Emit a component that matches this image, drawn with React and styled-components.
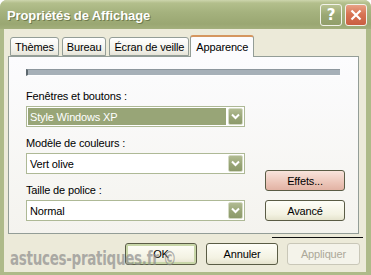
import React from "react";
import styled, { createGlobalStyle } from "styled-components";

const GlobalStyle = createGlobalStyle`
  html, body {
    margin: 0;
    padding: 0;
    background: #ffffff;
  }
  * {
    box-sizing: border-box;
  }
`;

const Window = styled.div`
  position: relative;
  width: 371px;
  height: 275px;
  display: flex;
  flex-direction: column;
  background: #aeba89;
  border-radius: 7px 7px 0 0;
  overflow: hidden;
  font-family: "Liberation Sans", Arial, sans-serif;
  font-size: 11px;
  letter-spacing: -0.15px;
  color: #000;
`;

const TitleBar = styled.div`
  height: 29px;
  flex: none;
  display: flex;
  align-items: center;
  justify-content: space-between;
  padding: 0 4px 0 7px;
  background: linear-gradient(
    #cdd5ad 0px,
    #b3bf8c 3px,
    #a5b27e 12px,
    #9aa772 24px,
    #a3af7c 29px
  );
`;

const Title = styled.span`
  color: #ffffff;
  font-family: "Liberation Sans", Arial, sans-serif;
  font-weight: bold;
  font-size: 13px;
  letter-spacing: -0.1px;
  text-shadow: 1px 1px 0 #6f7b4c;
  margin-top: 1px;
`;

const Controls = styled.div`
  display: flex;
  gap: 3px;
  margin-top: 1px;
`;

const CaptionButton = styled.div`
  width: 22px;
  height: 22px;
  border: 1px solid #f2f2ea;
  border-radius: 3px;
  display: flex;
  align-items: center;
  justify-content: center;
  color: #fff;
  font-family: "DejaVu Sans", sans-serif;
  font-weight: bold;
  font-size: 15px;
  background: ${(p) =>
    p.$close
      ? "linear-gradient(#e8a287, #d87454 45%, #c95e41)"
      : "linear-gradient(#b9c393, #9aa773 50%, #919e6a)"};
`;

const Body = styled.div`
  flex: 1;
  margin: 0 5px 3px 4px;
  background: #ecead9;
  display: flex;
  flex-direction: column;
  padding: 8px 0 7px 0;
`;

const TabRow = styled.div`
  display: flex;
  align-items: flex-end;
  gap: 3px;
  padding-left: 6px;
  height: 19px;
  position: relative;
  z-index: 1;
`;

const Tab = styled.div`
  height: ${(p) => (p.$active ? "22px" : "19px")};
  padding: 0 ${(p) => (p.$active ? "5px" : "4px")};
  margin-bottom: ${(p) => (p.$active ? "-1px" : "0")};
  margin-left: ${(p) => (p.$active ? "-2px" : "0")};
  display: flex;
  align-items: center;
  border: 1px solid #939d97;
  border-bottom: ${(p) => (p.$active ? "none" : "1px solid #939d97")};
  border-top: ${(p) => (p.$active ? "2px solid #d5965f" : "1px solid #939d97")};
  border-radius: 3px 3px 0 0;
  background: ${(p) =>
    p.$active ? "#fcfcfe" : "linear-gradient(#ffffff, #f2f1ea 70%, #e6e4d8)"};
  white-space: nowrap;
`;

const Panel = styled.div`
  height: 178px;
  margin: 0 7px 0 4px;
  border: 1px solid #939d97;
  background: linear-gradient(#fcfcfe, #f4f3ee);
  padding: 12px 17px 12px 17px;
  display: flex;
  flex-direction: column;
`;

const PreviewBar = styled.div`
  height: 7px;
  margin-right: 1px;
  background: #a6b0b8;
  border-left: 2px solid #5d686e;
  border-top: 1px solid #8d979e;
  border-bottom: 1px solid #ffffff;
`;

const Form = styled.div`
  margin-top: 13px;
  display: grid;
  grid-template-columns: 219px 80px;
  column-gap: 20px;
`;

const Fields = styled.div`
  display: flex;
  flex-direction: column;
  gap: 9px;
`;

const Field = styled.div`
  display: flex;
  flex-direction: column;
  gap: 3px;
`;

const Label = styled.div`
  line-height: 14px;
  height: 14px;
`;

const Select = styled.div`
  height: 21px;
  border: 1px solid #aeb996;
  background: #ffffff;
  display: flex;
  padding: 1px;
`;

const SelectValue = styled.div`
  flex: 1;
  display: flex;
  align-items: center;
  padding-left: 2px;
  background: ${(p) => (p.$selected ? "#98a577" : "transparent")};
  color: ${(p) => (p.$selected ? "#ffffff" : "#000000")};
  margin-right: 2px;
`;

const DropButton = styled.div`
  width: 15px;
  border: 1px solid #d4dac4;
  border-radius: 2px;
  background: linear-gradient(#b1bb92, #96a374 60%, #8d9a6b);
  display: flex;
  align-items: center;
  justify-content: center;
`;

const Side = styled.div`
  display: flex;
  flex-direction: column;
  justify-content: flex-end;
  gap: 9px;
`;

const Button = styled.div`
  width: ${(p) => p.$w || "80px"};
  height: ${(p) => p.$h || "21px"};
  border: 1px solid ${(p) => (p.$disabled ? "#c9c7b8" : "#5a5c45")};
  border-radius: 3px;
  display: flex;
  align-items: center;
  justify-content: center;
  color: ${(p) => (p.$disabled ? "#aca899" : "#000")};
  background: ${(p) =>
    p.$pink
      ? "linear-gradient(#f8e4dc, #ecc6b9 60%, #e2b3a4)"
      : p.$disabled
      ? "#f4f3ea"
      : "linear-gradient(#fefef8, #f3f2e2 70%, #e5e3cd)"};
  box-shadow: ${(p) => (p.$focus ? "inset 0 0 0 2px #c8d6a8" : "none")};
`;

const Separator = styled.div`
  align-self: flex-end;
  width: 91px;
  height: 1px;
  background: #111;
  margin: 3px 3px 5px 0;
`;

const ButtonRow = styled.div`
  display: flex;
  justify-content: flex-end;
  gap: 9px;
  padding-right: 6px;
`;

const Watermark = styled.div`
  position: absolute;
  left: 10px;
  top: 246px;
  font-family: "DejaVu Sans Condensed", "DejaVu Sans", sans-serif;
  font-weight: bold;
  font-size: 20px;
  letter-spacing: -0.4px;
  color: rgba(140, 140, 140, 0.7);
  white-space: nowrap;
  pointer-events: none;
  transform: scaleX(0.75);
  transform-origin: left center;
`;

function Chevron() {
  return (
    <svg width="9" height="7" viewBox="0 0 9 7">
      <path d="M1 1.5 L4.5 5 L8 1.5" fill="none" stroke="#fff" strokeWidth="2" />
    </svg>
  );
}

function Combo({ label, value, selected }) {
  return (
    <Field>
      <Label>{label}</Label>
      <Select>
        <SelectValue $selected={selected}>{value}</SelectValue>
        <DropButton>
          <Chevron />
        </DropButton>
      </Select>
    </Field>
  );
}

export default function App() {
  return (
    <Window>
      <GlobalStyle />
      <TitleBar>
        <Title>Propriétés de Affichage</Title>
        <Controls>
          <CaptionButton>?</CaptionButton>
          <CaptionButton $close>
            <svg width="12" height="12" viewBox="0 0 12 12">
              <path d="M1.5 1.5 L10.5 10.5 M10.5 1.5 L1.5 10.5" stroke="#fff" strokeWidth="2.2" />
            </svg>
          </CaptionButton>
        </Controls>
      </TitleBar>
      <Body>
        <TabRow>
          <Tab>Thèmes</Tab>
          <Tab>Bureau</Tab>
          <Tab>Écran de veille</Tab>
          <Tab $active>Apparence</Tab>
        </TabRow>
        <Panel>
          <PreviewBar />
          <Form>
            <Fields>
              <Combo label="Fenêtres et boutons :" value="Style Windows XP" selected />
              <Combo label="Modèle de couleurs :" value="Vert olive" />
              <Combo label="Taille de police :" value="Normal" />
            </Fields>
            <Side>
              <Button $pink>Effets...</Button>
              <Button>Avancé</Button>
            </Side>
          </Form>
        </Panel>
        <Separator />
        <ButtonRow>
          <Button $w="72px" $h="22px" $focus>OK</Button>
          <Button $w="72px" $h="22px">Annuler</Button>
          <Button $w="73px" $h="22px" $disabled>Appliquer</Button>
        </ButtonRow>
      </Body>
      <Watermark>astuces-pratiques.fr ©</Watermark>
    </Window>
  );
}
